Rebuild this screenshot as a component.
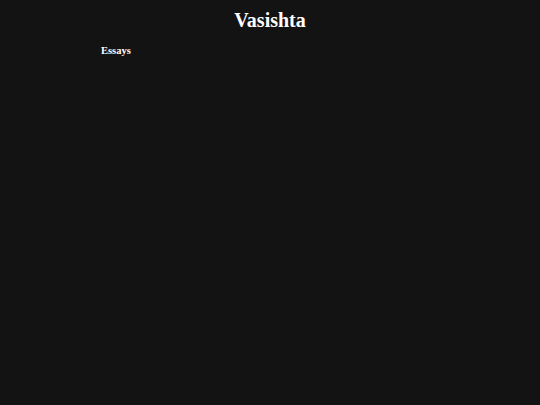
export default function App() {
  return (
    <div className="min-h-screen w-full bg-[#131313] text-white font-['Liberation_Serif',serif]">
      <h1 className="pt-[8px] text-center text-[20px] font-bold leading-[24px]">Vasishta</h1>
      <div className="mt-[13px] pl-[101px] text-[10.5px] font-bold leading-[12px]">Essays</div>
    </div>
  );
}
